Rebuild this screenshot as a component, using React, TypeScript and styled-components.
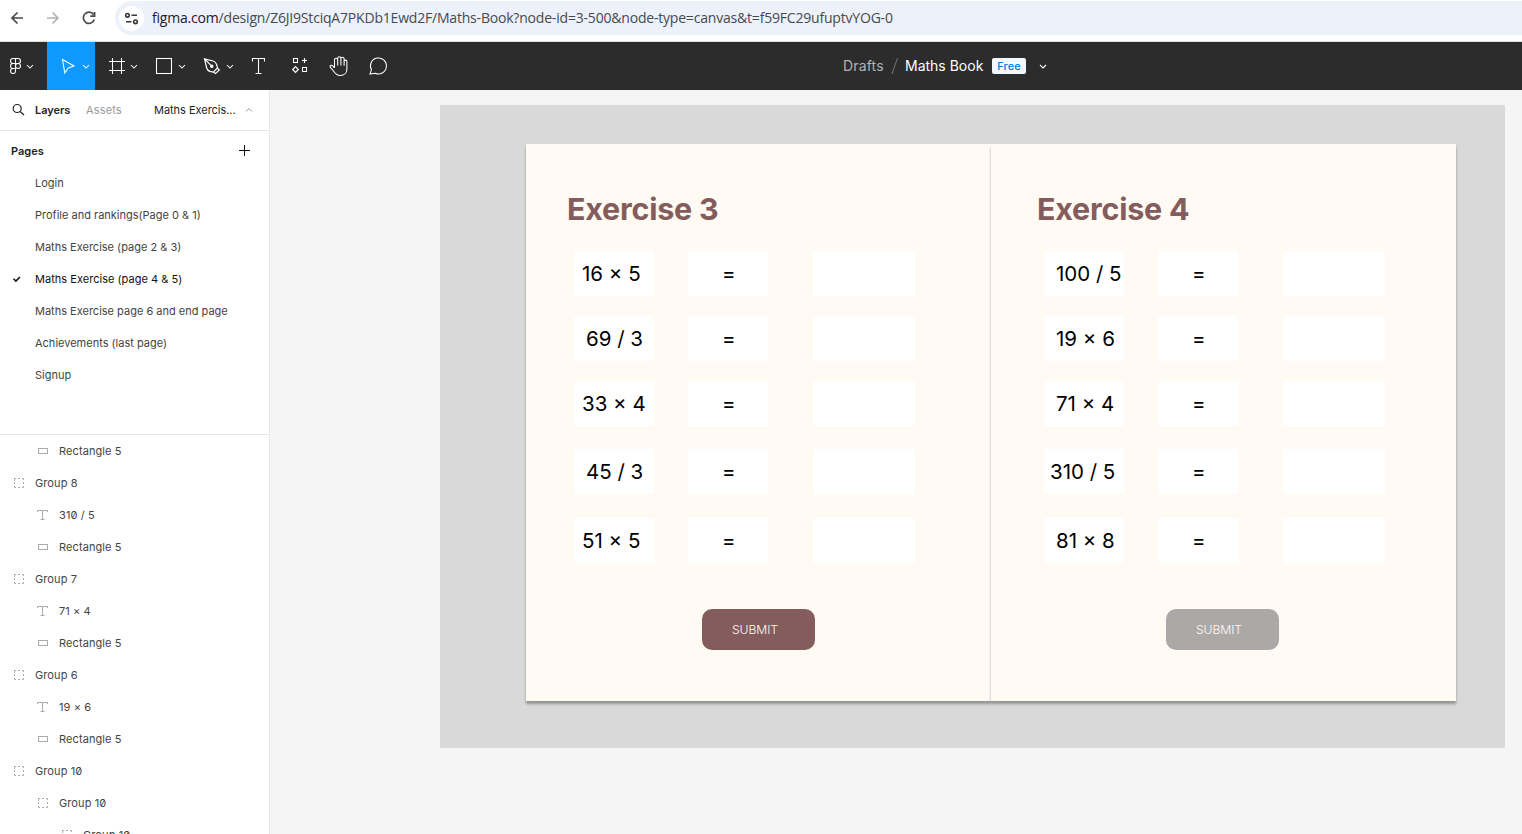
import React from "react";
import styled, { createGlobalStyle, css } from "styled-components";

const GlobalStyle = createGlobalStyle`
  * { box-sizing: border-box; }
  body { margin: 0; background: #f5f5f5; font-family: Inter, "Liberation Sans", sans-serif; overflow: hidden; }
  svg { display: block; flex: none; }
`;

const Window = styled.div`
  width: 1522px;
  height: 834px;
  display: flex;
  flex-direction: column;
  overflow: hidden;
`;

/* Browser bar */
const BrowserBar = styled.div`
  height: 42px;
  flex: none;
  display: flex;
  align-items: flex-start;
  background: #fff;
  border-bottom: 1px solid #dcdedf;
`;
const NavButtons = styled.div`
  width: 115px;
  height: 36px;
`;
const AddressBar = styled.div`
  flex: 1;
  height: 34px;
  margin-top: 1px;
  display: flex;
  align-items: center;
  padding-left: 4px;
  background: #ecf1fa;
  border-radius: 17px 0 0 17px;
`;
const SiteInfo = styled.div`
  width: 25px;
  height: 25px;
  border-radius: 50%;
  background: #fff;
`;
const Url = styled.span`
  margin-left: 8px;
  font: 14px/20px "Open Sans", "Noto Sans", sans-serif;
  letter-spacing: -0.195px;
  color: #474a4e;
  white-space: nowrap;
  b { font-weight: 400; color: #1f2023; }
`;

/* Toolbar */
const Toolbar = styled.div`
  height: 48px;
  flex: none;
  display: flex;
  background: #2c2c2c;
`;
const ToolGroup = styled.div`
  width: 843px;
  display: flex;
`;
const Tool = styled.div<{ $w: number; $active?: boolean }>`
  width: ${(p) => p.$w}px;
  height: 48px;
  background: ${(p) => (p.$active ? "#0d99ff" : "transparent")};
`;
const FileTitle = styled.div`
  display: flex;
  align-items: center;
  font-size: 14px;
  line-height: 20px;
  color: #fff;
`;
const Folder = styled.span`
  color: #b3b3b3;
  width: 41px;
  letter-spacing: 0.15px;
  white-space: nowrap;
`;
const FileName = styled.span`
  width: 78px;
  white-space: nowrap;
`;
const Badge = styled.span`
  margin: 0 11px 0 9px;
  width: 34px;
  height: 16px;
  border-radius: 2px;
  background: #f2f9ff;
  color: #007be5;
  font-size: 11px;
  font-weight: 500;
  line-height: 16px;
  letter-spacing: 0.1px;
  text-align: center;
`;

/* Body */
const Body = styled.div`
  flex: 1;
  min-height: 0;
  display: flex;
`;
const Sidebar = styled.div`
  width: 270px;
  flex: none;
  display: flex;
  flex-direction: column;
  background: #fff;
  border-right: 1px solid #e6e6e6;
  font-size: 11px;
  line-height: 16px;
  color: #4d4d4d;
  white-space: nowrap;
`;
const Tabs = styled.div`
  height: 41px;
  flex: none;
  display: flex;
  align-items: center;
  border-bottom: 1px solid #e6e6e6;
`;
const Tab = styled.span<{ $w: number; $kind?: "active" | "muted" }>`
  width: ${(p) => p.$w}px;
  color: #1e1e1e;
  letter-spacing: -0.03px;
  ${(p) => p.$kind === "active" && css`font-weight: 600;`}
  ${(p) => p.$kind === "muted" && css`color: #9a9a9a; letter-spacing: 0.15px;`}
`;
const Pages = styled.div`
  height: 304px;
  flex: none;
  border-bottom: 1px solid #e6e6e6;
`;
const PagesHeader = styled.div`
  height: 36px;
  padding: 4px 17px 0 11px;
  display: flex;
  align-items: center;
  justify-content: space-between;
  font-weight: 600;
  color: #1e1e1e;
`;
const PageRow = styled.div<{ $current?: boolean }>`
  height: 32px;
  display: flex;
  align-items: center;
  letter-spacing: ${(p) => (p.$current ? 0.03 : 0)}px;
  color: ${(p) => (p.$current ? "#111" : "#444")};
`;
const CheckSlot = styled.div`
  width: 35px;
  padding-left: 12px;
`;
const Layers = styled.div`
  flex: 1;
  min-height: 0;
  overflow: hidden;
`;
const LayerRow = styled.div<{ $depth: number }>`
  height: 32px;
  display: flex;
  align-items: center;
  gap: 8px;
  padding-left: ${(p) => 11 + p.$depth * 24}px;
  color: #444;
  letter-spacing: 0.09px;
  font-variant-numeric: slashed-zero;
`;

/* Canvas */
const Canvas = styled.div`
  flex: 1;
  background: #f5f5f5;
  padding: 15px 17px 0 170px;
`;
const Desk = styled.div`
  height: 643px;
  padding: 39px 49px 0 86px;
  background: #d9d9d9;
  display: flex;
`;
const BookPage = styled.div`
  width: 465px;
  height: 557px;
  padding: 46px 0 0 41px;
  background: #fffaf4;
  box-shadow: 0 2.5px 2.5px rgba(0, 0, 0, 0.32);
`;
const RightPage = styled(BookPage)`
  padding-left: 46px;
`;
const Title = styled.h1`
  margin: 0;
  font-size: 30.5px;
  line-height: 38px;
  font-weight: 700;
  letter-spacing: -0.25px;
  color: #855c5c;
  white-space: nowrap;
`;
const Sums = styled.div`
  margin: 23px 0 0 7px;
`;
const SumRow = styled.div<{ $gap: number }>`
  display: flex;
  margin-bottom: ${(p) => p.$gap}px;
`;
const Cell = styled.div<{ $w: number; $mr?: number; $pl?: number }>`
  width: ${(p) => p.$w}px;
  height: 45px;
  margin-right: ${(p) => p.$mr ?? 0}px;
  padding-left: ${(p) => p.$pl ?? 0}px;
  background: #fff;
  color: #000;
  font-size: 20.5px;
  font-weight: 375;
  line-height: 45px;
  white-space: nowrap;
`;
const Submit = styled.button<{ $left: number; $disabled?: boolean }>`
  display: block;
  margin: 46px 0 0 ${(p) => p.$left}px;
  width: 113px;
  height: 41px;
  padding: 0 0 0 30px;
  border: 0;
  border-radius: 10px;
  background: ${(p) => (p.$disabled ? "#aca8a7" : "#855c5c")};
  color: #fffaf4;
  font: 350 12.2px/41px Inter, sans-serif;
  letter-spacing: -0.08px;
  text-align: left;
`;

const Chevron = ({ x, y = 24.5 }: { x: number; y?: number }) => (
  <path d={`M${x - 3} ${y - 1.5}l3 3 3-3`} />
);

const ToolIcon = ({ w, children }: { w: number; children: React.ReactNode }) => (
  <svg width={w} height="48" fill="none" stroke="#fff" strokeWidth="1.05">
    {children}
  </svg>
);

const layerIcons = {
  rect: <rect x="3.5" y="5.5" width="9" height="5" />,
  group: (
    <path d="M3.5 6V3.5H5M7 3.5h2M11 3.5h1.5V5M12.5 7v2M12.5 11v1.5H11M9 12.5H7M5 12.5H3.5V11M3.5 9V7" />
  ),
  text: <path d="M2.5 5V3.5h10V5M7.5 3.5v9M5.5 12.5h4" />,
};
type LayerKind = keyof typeof layerIcons;

const pages = [
  "Login",
  "Profile and rankings(Page 0 & 1)",
  "Maths Exercise (page 2 & 3)",
  "Maths Exercise (page 4 & 5)",
  "Maths Exercise page 6 and end page",
  "Achievements (last page)",
  "Signup",
];
const currentPage = 3;

const layers: [LayerKind, number, string][] = [
  ["rect", 1, "Rectangle 5"],
  ["group", 0, "Group 8"],
  ["text", 1, "310 / 5"],
  ["rect", 1, "Rectangle 5"],
  ["group", 0, "Group 7"],
  ["text", 1, "71 × 4"],
  ["rect", 1, "Rectangle 5"],
  ["group", 0, "Group 6"],
  ["text", 1, "19 × 6"],
  ["rect", 1, "Rectangle 5"],
  ["group", 0, "Group 10"],
  ["group", 1, "Group 10"],
  ["group", 2, "Group 10"],
];

const gaps = [20, 20, 23, 24, 0];
const exercises = [
  {
    title: "Exercise 3",
    sums: [["16 × 5", 8], ["69 / 3", 12], ["33 × 4", 8], ["45 / 3", 12], ["51 × 5", 8]] as [string, number][],
    submitLeft: 135,
    disabled: false,
  },
  {
    title: "Exercise 4",
    sums: [["100 / 5", 12], ["19 × 6", 12], ["71 × 4", 12], ["310 / 5", 6], ["81 × 8", 12]] as [string, number][],
    submitLeft: 129,
    disabled: true,
  },
];

export default function App() {
  return (
    <Window>
      <GlobalStyle />
      <BrowserBar>
        <NavButtons>
          <svg width="115" height="36" fill="none" strokeWidth="1.7">
            <path d="M23 18H12M17.5 12.5L12 18l5.5 5.5" stroke="#47494d" />
            <path d="M47 18h11M52.5 12.5L58 18l-5.5 5.5" stroke="#b0b2b5" />
            <path d="M93.5 14.5A5.6 5.6 0 1 0 94.3 19.5M94.6 12v4.2h-4.3" stroke="#47494d" />
          </svg>
        </NavButtons>
        <AddressBar>
          <SiteInfo>
            <svg width="25" height="25" fill="none" stroke="#35373a" strokeWidth="1.6">
              <circle cx="8.5" cy="9.3" r="1.8" />
              <path d="M12.5 9.3H18M7 15.8h5.5" />
              <circle cx="16.5" cy="15.8" r="1.8" />
            </svg>
          </SiteInfo>
          <Url>
            <b>figma.com</b>/design/Z6JI9StciqA7PKDb1Ewd2F/Maths-Book?node-id=3-500&amp;node-type=canvas&amp;t=f59FC29ufuptvYOG-0
          </Url>
        </AddressBar>
      </BrowserBar>

      <Toolbar>
        <ToolGroup>
          <Tool $w={47}>
            <ToolIcon w={47}>
              <path d="M15.5 16.5H13a2.5 2.5 0 0 0 0 5h2.5zM15.5 16.5H18a2.5 2.5 0 0 1 0 5h-2.5M15.5 21.5H13a2.5 2.5 0 0 0 0 5h2.5zM15.5 26.5H13a2.5 2.5 0 1 0 2.500 2.500z" />
              <circle cx="18" cy="24" r="2.5" />
              <Chevron x={30} />
            </ToolIcon>
          </Tool>
          <Tool $w={48} $active>
            <ToolIcon w={48}>
              <path d="M15.5 17.5L27 24l-5.6 1.9-3.6 5z" />
              <Chevron x={39} />
            </ToolIcon>
          </Tool>
          <Tool $w={48}>
            <ToolIcon w={48}>
              <path d="M17.5 16v16M26.5 16v16M14 19.5h16M14 28.5h16" />
              <Chevron x={39} />
            </ToolIcon>
          </Tool>
          <Tool $w={48}>
            <ToolIcon w={48}>
              <rect x="13.5" y="16.5" width="15" height="15" />
              <Chevron x={39} />
            </ToolIcon>
          </Tool>
          <Tool $w={48}>
            <ToolIcon w={48}>
              <path d="M13.5 16.8l8.5 2.2c2 .6 3 1.600 3.600 3.400l.9 3.600-4.200 4.200-3.400-.8c-1.700-.6-2.700-1.600-3.200-3.400zM13.500 16.800l6.500 6.500M26.500 26l1.800 1.900-3.800 3.700-2.200-1.500" strokeWidth="1.2" />
              <circle cx="20.8" cy="24.2" r="1.2" fill="#fff" />
              <Chevron x={39} />
            </ToolIcon>
          </Tool>
          <Tool $w={40}>
            <ToolIcon w={40}>
              <path d="M13.5 19.5v-3h12v3M19.5 16.5v15M16.5 31.5h6" />
            </ToolIcon>
          </Tool>
          <Tool $w={40}>
            <ToolIcon w={40}>
              <rect x="14.5" y="16.5" width="4" height="4" />
              <rect x="23.5" y="25.5" width="4" height="4" />
              <path d="M25.5 16v5M23 18.5h5M16.5 24.7l2.8 2.8-2.8 2.8-2.8-2.8z" strokeWidth="1.2" />
            </ToolIcon>
          </Tool>
          <Tool $w={40}>
            <ToolIcon w={40}>
              <path d="M15.5 26v-8.2a1.6 1.6 0 0 1 3.2 0V23.5M18.7 23.5v-7.2a1.6 1.6 0 0 1 3.2 0V23.5M21.9 23.5v-6.7a1.6 1.6 0 0 1 3.2 0v7M25.1 19.5a1.4 1.4 0 0 1 2.8 0V27c0 4-2.7 6.5-6.4 6.5-3 0-5-1.5-6.6-4l-3.6-4.3c-1-1.5 1-2.7 2.3-1.5l1.9 2.1" />
            </ToolIcon>
          </Tool>
          <Tool $w={40}>
            <ToolIcon w={40}>
              <path d="M11 32l1.4-4.2A8 8 0 1 1 16 31.2z" />
            </ToolIcon>
          </Tool>
        </ToolGroup>
        <FileTitle>
          <Folder>Drafts</Folder>
          <svg width="21" height="20" fill="none" stroke="#757575">
            <path d="M8 18L13.5 2" />
          </svg>
          <FileName>Maths Book</FileName>
          <Badge>Free</Badge>
          <svg width="12" height="48" fill="none" stroke="#fff" strokeWidth="1.1">
            <Chevron x={6} y={24.5} />
          </svg>
        </FileTitle>
      </Toolbar>

      <Body>
        <Sidebar>
          <Tabs>
            <svg width="35" height="40" fill="none" stroke="#222" strokeWidth="1.2">
              <circle cx="17.2" cy="18.5" r="4" />
              <path d="M20.2 21.5l3.8 3.5" />
            </svg>
            <Tab $w={51} $kind="active">Layers</Tab>
            <Tab $w={68} $kind="muted">Assets</Tab>
            <Tab $w={91}>Maths Exercis...</Tab>
            <svg width="9" height="16" fill="none" stroke="#999">
              <path d="M1 9.5l3-3 3 3" />
            </svg>
          </Tabs>
          <Pages>
            <PagesHeader>
              Pages
              <svg width="15" height="15" fill="none" stroke="#111">
                <path d="M7.5 1v11M2 6.5h11" />
              </svg>
            </PagesHeader>
            {pages.map((name, i) => (
              <PageRow key={name} $current={i === currentPage}>
                <CheckSlot>
                  {i === currentPage && (
                    <svg width="10" height="10" fill="none" stroke="#111" strokeWidth="1.6">
                      <path d="M1.500 4.800l2.300 2.300L8 3" />
                    </svg>
                  )}
                </CheckSlot>
                {name}
              </PageRow>
            ))}
          </Pages>
          <Layers>
            {layers.map(([kind, depth, name], i) => (
              <LayerRow key={i} $depth={depth}>
                <svg width="16" height="16" fill="none" stroke="#aaa">
                  {layerIcons[kind]}
                </svg>
                {name}
              </LayerRow>
            ))}
          </Layers>
        </Sidebar>

        <Canvas>
          <Desk>
            {exercises.map((ex, i) => {
              const PageBox = i === 0 ? BookPage : RightPage;
              return (
                <PageBox key={ex.title}>
                  <Title>{ex.title}</Title>
                  <Sums>
                    {ex.sums.map(([sum, pad], r) => (
                      <SumRow key={sum} $gap={gaps[r]}>
                        <Cell $w={80} $mr={34} $pl={pad}>{sum}</Cell>
                        <Cell $w={80} $mr={45} $pl={34}>=</Cell>
                        <Cell $w={102} />
                      </SumRow>
                    ))}
                  </Sums>
                  <Submit $left={ex.submitLeft} $disabled={ex.disabled}>SUBMIT</Submit>
                </PageBox>
              );
            })}
          </Desk>
        </Canvas>
      </Body>
    </Window>
  );
}
